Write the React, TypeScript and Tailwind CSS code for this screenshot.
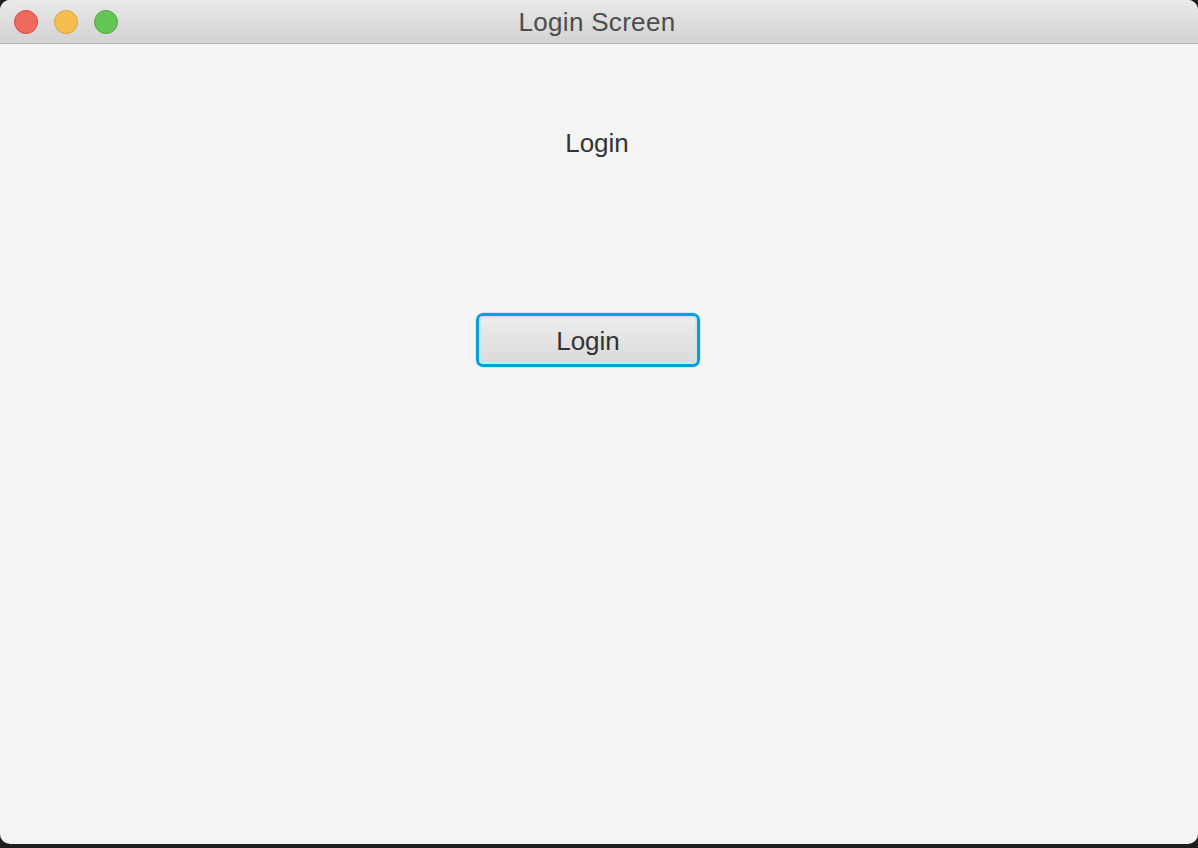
export default function App() {
  return (
    <div className="h-[848px] w-[1198px] bg-[#1e1e1e] font-['Liberation_Sans',Arial,sans-serif]">
      <div className="flex h-[844px] flex-col overflow-hidden rounded-[10px] bg-[#f4f4f4]">
        {/* Title bar */}
        <div className="relative flex h-[44px] shrink-0 items-center border-b border-[#b4b4b4] bg-gradient-to-b from-[#e9e9e9] to-[#d2d2d2]">
          <div className="absolute left-[14px] top-[10px] flex gap-[16px]">
            <span className="h-[24px] w-[24px] rounded-full border border-[#e0443e] bg-[#ee6a5f]"></span>
            <span className="h-[24px] w-[24px] rounded-full border border-[#dea236] bg-[#f6be4f]"></span>
            <span className="h-[24px] w-[24px] rounded-full border border-[#52a842] bg-[#62c554]"></span>
          </div>
          <div className="w-full pr-[4px] text-center text-[26px] leading-[30px] tracking-[0.3px] text-[#4d4d4d]">Login Screen</div>
        </div>

        {/* Content */}
        <div className="flex flex-col items-center pt-[84px]">
          <div className="ml-[-4px] text-[26px] leading-[30px] text-[#333]">Login</div>
          <div className="mr-[22px] mt-[155px] rounded-[8px] shadow-[0_0_0_1px_#cfe9f4]">
            <button className="flex h-[54px] w-[224px] items-center justify-center rounded-[7px] border-[3px] border-[#0a9fd8] bg-gradient-to-b from-[#ededed] to-[#dadada] pt-[2px] text-[26px] text-[#333] shadow-[inset_0_0_0_2px_#cfe6f0]">
              Login
            </button>
          </div>
        </div>
      </div>
    </div>
  )
}
